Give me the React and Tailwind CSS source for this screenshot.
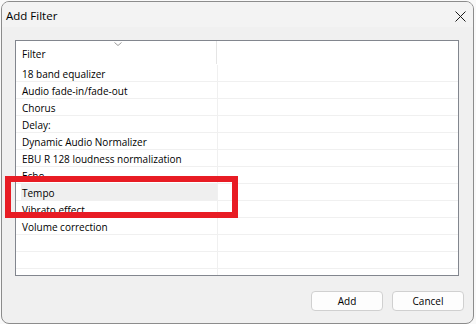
import React from 'react';

const FILTERS = [
    '18 band equalizer',
    'Audio fade-in/fade-out',
    'Chorus',
    'Delay:',
    'Dynamic Audio Normalizer',
    'EBU R 128 loudness normalization',
    'Echo',
    'Tempo',
    'Vibrato effect',
    'Volume correction',
    '',
    '',
    '',
];

const font = { fontFamily: '"Open Sans", "Noto Sans", sans-serif' };

const Row = ({ name, selected }) => (
    <div className="flex h-[17px] border-b border-[#f0f0f0]">
        <div className="w-[201px] h-full pl-[5px]">
            <div className={`h-full flex items-center pl-[1px] pt-[2px] ${selected ? 'bg-[#efefef]' : ''}`}>
                {name}
            </div>
        </div>
        <div className="flex-1 h-full border-l border-[#f0f0f0]"></div>
    </div>
);

const App = () => {
    return (
        <div className="w-[476px] h-[324px] bg-[#f9f9f9] relative overflow-hidden text-[10px] text-black" style={font}>
            <div className="ml-[1px] mt-[1px] w-[473px] h-[323px] rounded-[8px] border border-[#8c8c8c] bg-[#f0f0f0] overflow-hidden flex flex-col">
                <div className="h-[25px] shrink-0 bg-[#f3f3f3] flex items-center justify-between pl-[4px] pr-[7px]">
                    <span className="leading-none mt-[3px] text-[11.5px]">Add Filter</span>
                    <svg width="11" height="11" viewBox="0 0 11 11" className="mt-[3px]">
                        <path d="M0.5 0.5 L10.5 10.5 M10.5 0.5 L0.5 10.5" stroke="#1a1a1a" strokeWidth="1" />
                    </svg>
                </div>
                <div className="flex-1 flex flex-col pt-[13px] pl-[13px]">
                    <div className="w-[444px] h-[236px] border border-[#82868e] bg-white overflow-hidden">
                        <div className="flex h-[24px]">
                            <div className="w-[200px] relative flex items-center pl-[6px] pt-[3px]">
                                Filter
                                <svg width="8" height="4" viewBox="0 0 8 4" className="absolute left-[98px] top-[1px]">
                                    <path d="M0.5 0.5 L4 3.5 L7.5 0.5" stroke="#9a9a9a" strokeWidth="1" fill="none" />
                                </svg>
                            </div>
                            <div className="w-[1px] h-[23px] bg-[#e5e5e5]"></div>
                            <div className="flex-1"></div>
                        </div>
                        {FILTERS.map((f, i) => (
                            <Row key={i} name={f} selected={f === 'Tempo'} />
                        ))}
                    </div>
                    <div className="flex justify-end gap-[9px] mt-[15px] pr-[9px]">
                        <button className="w-[72px] h-[20px] rounded-[4px] border border-[#d0d0d0] bg-[#fdfdfd] flex items-center justify-center">Add</button>
                        <button className="w-[72px] h-[20px] rounded-[4px] border border-[#d0d0d0] bg-[#fdfdfd] flex items-center justify-center">Cancel</button>
                    </div>
                </div>
            </div>
            <div className="absolute left-[5px] top-[176px] w-[233px] h-[42px] border-[6px] border-[#e81c24]"></div>
        </div>
    );
};

export default App;
